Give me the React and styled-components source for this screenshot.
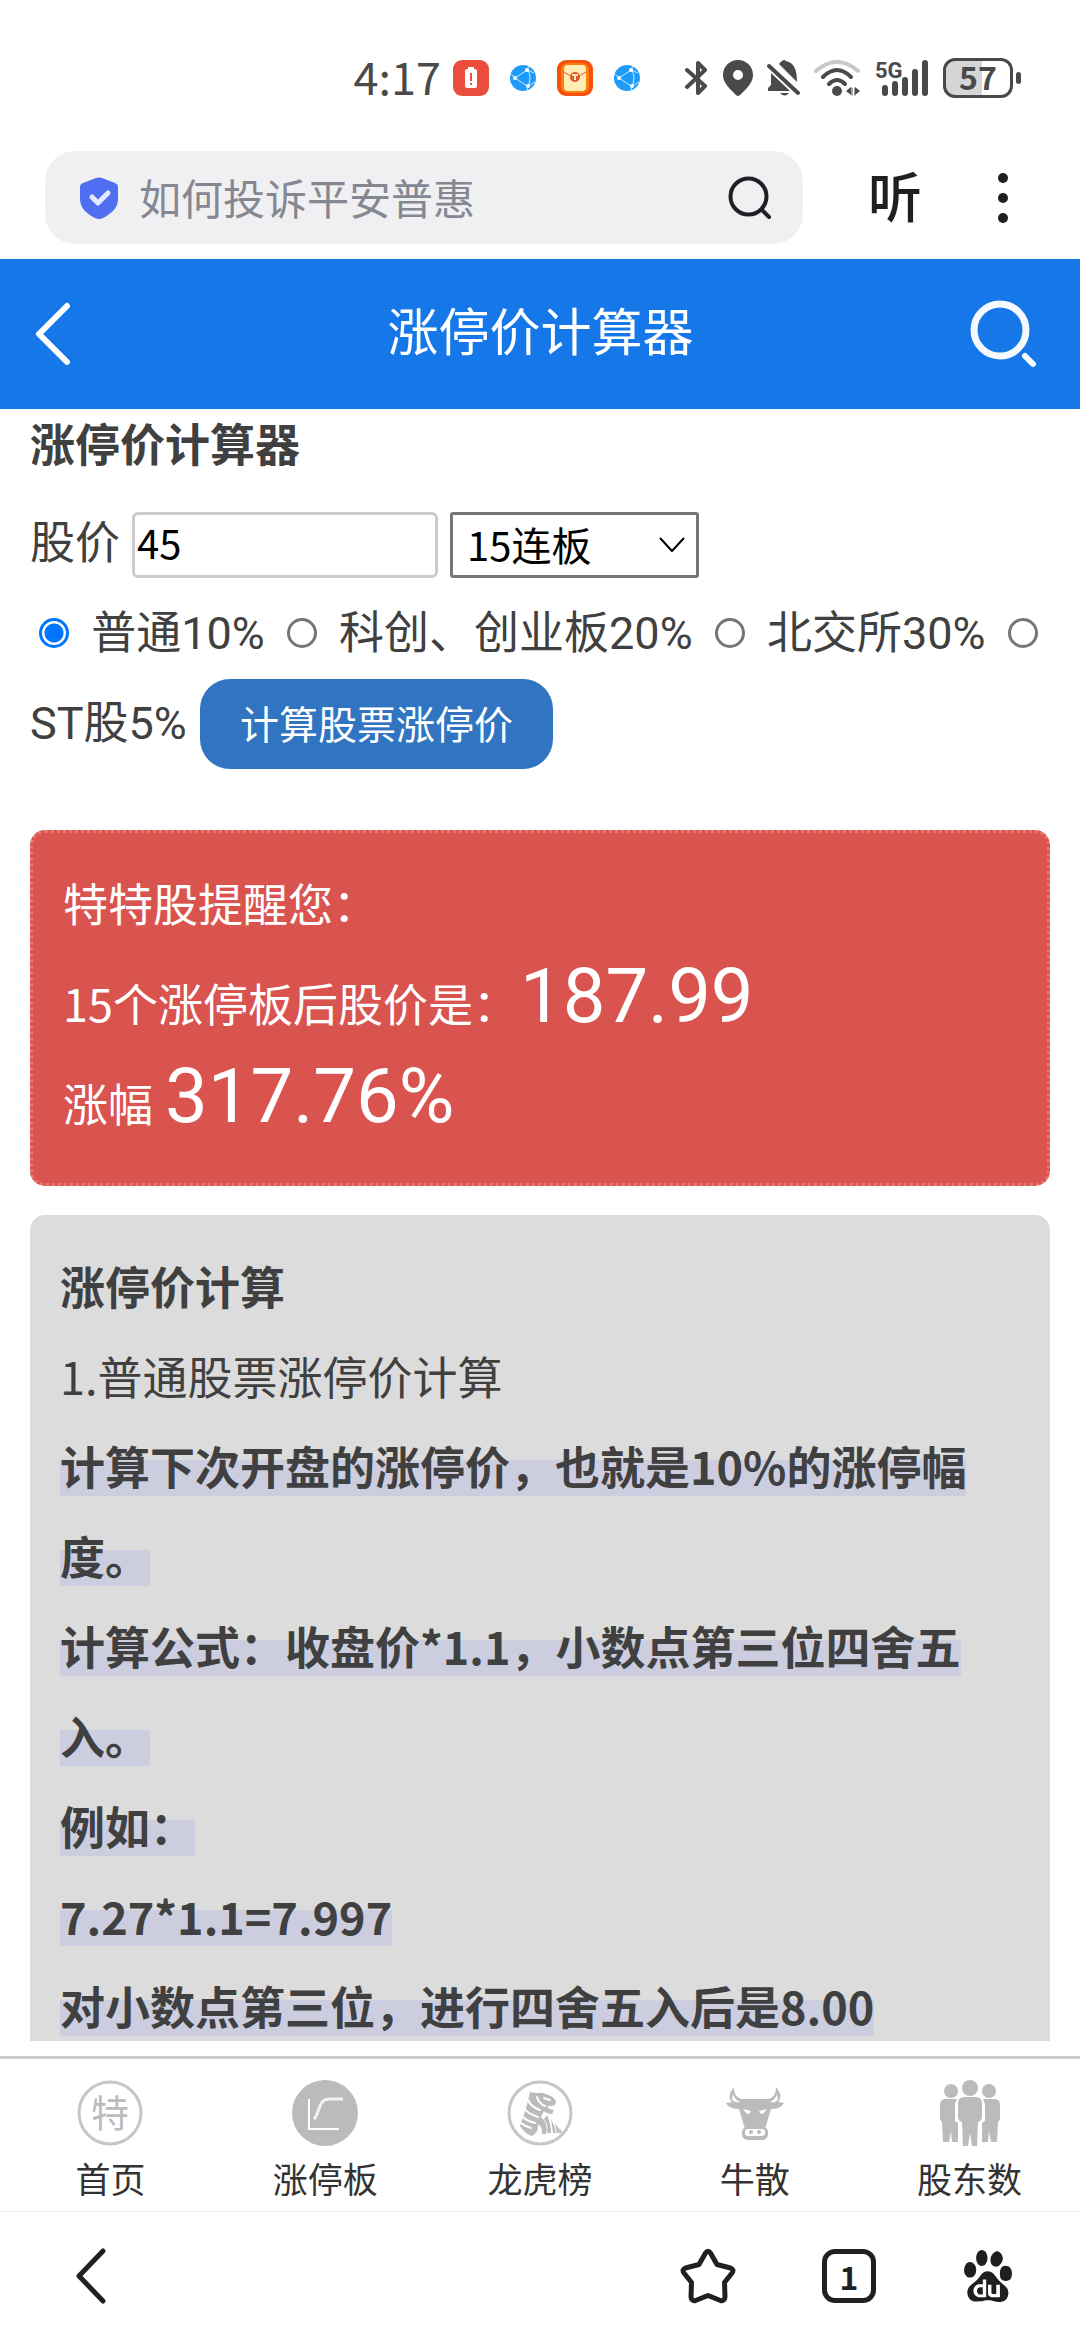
import React, { useState } from "react";
import styled, { createGlobalStyle } from "styled-components";
import { SiBaidu } from "react-icons/si";

const MARKETS = [
  { value: "10", label: "普通10%" },
  { value: "20", label: "科创、创业板20%" },
  { value: "30", label: "北交所30%" },
  { value: "5", label: "ST股5%" },
];

const TABS = [
  { name: "首页", icon: <HomeIcon /> },
  { name: "涨停板", icon: <LimitIcon /> },
  { name: "龙虎榜", icon: <TigerIcon /> },
  { name: "牛散", icon: <BullIcon /> },
  { name: "股东数", icon: <HoldersIcon /> },
];

export default function App() {
  return (
    <Screen>
      <GlobalStyle />
      <StatusBar />
      <AddressBar />
      <PageHeader>
        <IconButton aria-label="返回">
          <svg width="36" height="64" viewBox="0 0 36 64" fill="none" stroke="#fff" strokeWidth="6" strokeLinecap="round" strokeLinejoin="round">
            <path d="M32 4 4 32l28 28" />
          </svg>
        </IconButton>
        <PageTitle>涨停价计算器</PageTitle>
        <IconButton aria-label="搜索">
          <svg width="68" height="68" viewBox="0 0 68 68" fill="none" stroke="#f4faff" strokeLinecap="round">
            <circle cx="30" cy="30" r="26" strokeWidth="7" />
            <path d="m55 56 8 8" strokeWidth="6" />
          </svg>
        </IconButton>
      </PageHeader>
      <Main>
        <Calculator />
        <Guide />
      </Main>
      <TabBar>
        {TABS.map((tab) => (
          <Tab key={tab.name} href="#">
            {tab.icon}
            {tab.name}
          </Tab>
        ))}
      </TabBar>
      <BrowserBar>
        <IconButton aria-label="后退">
          <svg width="32" height="58" viewBox="0 0 32 58" fill="none" stroke="#1f2024" strokeWidth="5" strokeLinecap="round" strokeLinejoin="round">
            <path d="M28 4 4 29l24 25" />
          </svg>
        </IconButton>
        <BrowserActions>
          <IconButton aria-label="收藏">
            <svg width="56" height="56" viewBox="0 0 56 56" fill="none" stroke="#1f2024" strokeWidth="5" strokeLinejoin="round">
              <path d="M25.400 5.200Q28 1.500 30.600 5.200L37 16.500 50.500 20Q54.500 21.500 52 25L44.500 34.500 45 49Q44.500 53.500 40.500 52.500L28 47.500 15.500 52.500Q11.500 53.500 11 49L11.500 34.500 4 25Q1.500 21.500 5.500 20L19 16.500Z" />
            </svg>
          </IconButton>
          <TabCount aria-label="窗口">1</TabCount>
          <IconButton aria-label="百度">
            <SiBaidu size={52} color="#1f1f1f" />
          </IconButton>
        </BrowserActions>
      </BrowserBar>
    </Screen>
  );
}

function StatusBar() {
  return (
    <StatusRow>
      <Clock>4:17</Clock>
      <Notifications>
        <svg width="36" height="36" viewBox="0 0 36 36">
          <rect width="36" height="36" rx="9" fill="#ea4d3c" />
          <path d="M15 7h6v2h-6zM14 9h8q2 0 2 2v15q0 2-2 2h-8q-2 0-2-2V11q0-2 2-2z" fill="#fff" />
          <path d="M18 13v8M18 23v2" stroke="#ea4d3c" strokeWidth="2" />
        </svg>
        <GlobeIcon />
        <svg width="36" height="36" viewBox="0 0 36 36">
          <rect width="36" height="36" rx="9" fill="#f4520c" />
          <rect x="4" y="3" width="28" height="30" rx="7" fill="#ff7d0c" />
          <rect x="7" y="5" width="22" height="26" rx="4" fill="#ffedb5" />
          <path d="M7 12q11 9 22 0" fill="none" stroke="#e8552a" />
          <circle cx="18" cy="17" r="5" fill="#e8552a" />
          <path d="M15 15h6M18 15v5" stroke="#ffedb5" strokeWidth="2" />
        </svg>
        <GlobeIcon />
      </Notifications>
      <SystemIcons>
        <svg width="24" height="36" viewBox="0 0 24 36" fill="none" stroke="#4a4a4a" strokeWidth="4" strokeLinejoin="round" strokeLinecap="round">
          <path d="M2 10 20 26l-7 7V3l7 7L2 27" />
        </svg>
        <svg width="30" height="36" viewBox="0 0 30 36" fill="#4a4a4a" fillRule="evenodd">
          <path d="M15 0C6 0 0 7 0 15c0 8 7 14 13 20q2 2 4 0c6-6 13-12 13-20C30 7 24 0 15 0zm0 10a5 5 0 1 1 0 10 5 5 0 0 1 0-10z" />
        </svg>
        <svg width="33" height="36" viewBox="0 0 33 36" fill="#4a4a4a">
          <path d="M4 13 23 31H1v-3l3-3zM12 4q1-2 3-3 2-2 4 0c8 2 11 8 11 21zM13 33h9q-4 5-9 0z" />
          <path d="m2 6 29 27" stroke="#4a4a4a" strokeWidth="4" strokeLinecap="round" />
        </svg>
        <svg width="47" height="36" viewBox="0 0 47 36" fill="none" stroke="#4a4a4a" strokeWidth="4" strokeLinecap="round">
          <path d="M2 11q21-18 42 0" stroke="#c9c9c9" />
          <path d="M9 17q14-14 28 0M15 24q8-8 16 0" />
          <circle cx="23" cy="31" r="5" fill="#4a4a4a" stroke="none" />
          <path d="M37 27v8l-5-4zM41 27v8l5-4z" fill="#4a4a4a" stroke="none" />
          <path d="M38 28v7M41 28v7" strokeWidth="1" />
        </svg>
        <svg width="54" height="56" viewBox="0 -10 54 56">
          <text x="0" y="18" fontSize="22" fontWeight="700" fill="#4a4a4a" fontFamily="Roboto, sans-serif">
            5G
          </text>
          <path d="M10 28v5M20 24v9M30 20v13M40 12v21M50 3v30" stroke="#4a4a4a" strokeWidth="6" strokeLinecap="round" />
        </svg>
        <Battery>57</Battery>
      </SystemIcons>
    </StatusRow>
  );
}

function AddressBar() {
  return (
    <AddressRow>
      <SearchBox>
        <svg width="40" height="42" viewBox="0 0 40 42">
          <path d="M17 1q3-1 6 0l13 5q3 1 3 4v12c0 9-7 15-15 19q-4 2-8 0C8 37 1 31 1 22V10q0-3 3-4z" fill="#4f6ef2" />
          <path d="m13 20 6 6 10-10" fill="none" stroke="#e4e9ff" strokeWidth="5" strokeLinecap="round" strokeLinejoin="round" />
        </svg>
        <SearchInput aria-label="搜索" placeholder="如何投诉平安普惠" />
        <svg width="44" height="44" viewBox="0 0 44 44" fill="none" stroke="#1f2024" strokeWidth="4" strokeLinecap="round">
          <circle cx="20.500" cy="20.500" r="18" />
          <path d="m34 34 7 7" />
        </svg>
      </SearchBox>
      <ListenButton>听</ListenButton>
      <IconButton aria-label="更多">
        <svg width="12" height="52" viewBox="0 0 12 52" fill="#1f2024">
          <circle cx="6" cy="6" r="5" />
          <circle cx="6" cy="26" r="5" />
          <circle cx="6" cy="46" r="5" />
        </svg>
      </IconButton>
    </AddressRow>
  );
}

function Calculator() {
  const [price, setPrice] = useState("45");
  const [boards, setBoards] = useState(15);
  const [rate, setRate] = useState("10");
  const [result, setResult] = useState({ boards: 15, price: "187.99", gain: "317.76" });

  // 每个涨停价都四舍五入到分
  const calculate = (e) => {
    e.preventDefault();
    const start = Number(price);
    let current = start;
    for (let i = 0; i < boards; i++) {
      current = Math.round(current * (100 + Number(rate))) / 100;
    }
    setResult({
      boards,
      price: current.toFixed(2),
      gain: ((current / start - 1) * 100).toFixed(2),
    });
  };

  return (
    <>
      <SectionTitle>涨停价计算器</SectionTitle>
      <form onSubmit={calculate}>
        <PriceRow>
          <PriceLabel htmlFor="price">股价</PriceLabel>
          <PriceInput id="price" value={price} onChange={(e) => setPrice(e.target.value)} />
          <SelectWrap>
            <BoardSelect
              aria-label="连板数"
              value={boards}
              onChange={(e) => setBoards(Number(e.target.value))}
            >
              {Array.from({ length: 20 }, (_, i) => (
                <option key={i} value={i + 1}>
                  {i + 1}连板
                </option>
              ))}
            </BoardSelect>
            <svg width="26" height="16" viewBox="0 0 26 16" fill="none" stroke="#000" strokeWidth="2">
              <path d="m1 1 12 13L25 1" />
            </svg>
          </SelectWrap>
        </PriceRow>
        <MarketRow>
          {MARKETS.map((market) => (
            <React.Fragment key={market.value}>
              <MarketLabel>
                <Radio
                  type="radio"
                  name="market"
                  value={market.value}
                  checked={rate === market.value}
                  onChange={() => setRate(market.value)}
                />{" "}
                {market.label}
              </MarketLabel>{" "}
            </React.Fragment>
          ))}
          <SubmitButton type="submit">计算股票涨停价</SubmitButton>
        </MarketRow>
      </form>
      <ResultBox>
        <ResultLine>特特股提醒您：</ResultLine>
        <ResultLine>
          {result.boards}个涨停板后股价是：
          <Figure>{result.price}</Figure>
        </ResultLine>
        <ResultLine>
          涨幅
          <Figure $spaced>{result.gain}%</Figure>
        </ResultLine>
      </ResultBox>
    </>
  );
}

function Guide() {
  return (
    <GuideBox>
      <GuideTitle>涨停价计算</GuideTitle>
      <p>1.普通股票涨停价计算</p>
      <p>
        <Mark>计算下次开盘的涨停价，也就是10%的涨停幅度。</Mark>
      </p>
      <p>
        <Mark>计算公式：收盘价*1.1，小数点第三位四舍五入。</Mark>
      </p>
      <p>
        <Mark>例如：</Mark>
      </p>
      <p>
        <Mark>7.27*1.1=7.997</Mark>
      </p>
      <p>
        <Mark>对小数点第三位，进行四舍五入后是8.00</Mark>
      </p>
    </GuideBox>
  );
}

function GlobeIcon() {
  return (
    <svg width="26" height="26" viewBox="0 0 26 26">
      <circle cx="13" cy="13" r="13" fill="#1e9bfa" />
      <g fill="none" stroke="#c9ecff" strokeWidth="1">
        <path d="M5 13 17 5M5 13l12 8M18 5q4 8 0 16M5 13 1 9M17 5l2-4M18 21l-1 5M17 5l7 3M18 21l7-4" />
      </g>
      <circle cx="5" cy="13" r="2" fill="#fff" />
      <circle cx="17" cy="5" r="2" fill="#fff" />
      <circle cx="18" cy="21" r="2" fill="#fff" />
    </svg>
  );
}

function HomeIcon() {
  return (
    <svg width="66" height="66" viewBox="0 0 66 66">
      <circle cx="33" cy="33" r="31" fill="none" stroke="#c6c6c6" strokeWidth="3" />
      <text x="33" y="47" textAnchor="middle" fontSize="38" fill="#bcbcbc" fontFamily="Noto Sans CJK SC, sans-serif">
        特
      </text>
    </svg>
  );
}

function LimitIcon() {
  return (
    <svg width="66" height="66" viewBox="0 0 66 66" fill="none" stroke="#fff">
      <circle cx="33" cy="33" r="33" fill="#bbb" stroke="none" />
      <path d="M17 19v30h30" strokeWidth="2" />
      <path d="M22 39c6-6 4-20 15-20h14" stroke="#f2f2f2" strokeWidth="3" />
    </svg>
  );
}

function TigerIcon() {
  return (
    <svg width="66" height="66" viewBox="0 0 66 66">
      <circle cx="33" cy="33" r="31" fill="none" stroke="#c6c6c6" strokeWidth="3" />
      <g fill="#bbb">
        <path d="M23 12l6 1q7-1 12 2 5 1 8 6l-1 4-4 1-4 0 2 3 5 1-2 4q-5 0-8-3l-3 6q8 6 5 17l-4 0q1-6-4-10 1 8-6 12-7-2-12-10l2-6 3-9 3-10z" />
        <path d="M40 35q4 9 4 18h-4q2-8-3-14zM44 39q4 7 5 14h-3zM48 43q4 5 5 10h-3zM52 48q3 2 3 5h-2z" />
      </g>
      <g fill="none" stroke="#fff" strokeWidth="2" strokeLinecap="round">
        <path d="M21 20q3 7 12 10M17 28q4 6 14 9M14 35q5 6 14 8M14 43q5 4 10 5M30 17q2 7 8 9M37 18l6 2" />
      </g>
    </svg>
  );
}

function BullIcon() {
  return (
    <svg width="66" height="66" viewBox="0 0 66 66" fill="#bbb">
      <path d="M12 7C6 14 7 19 10 22L4 23Q7 29 17 29L22 46H44L49 29Q59 29 62 23L56 22C59 19 60 14 54 7 54 13 52 18 46 19H20C14 18 12 13 12 7Z" />
      <path d="M23 46h20l3 5q1 9-6 9H26q-7 0-6-9z" />
      <path d="M11 14q2 6 7 8-6 1-8-3zM55 14q-2 6-7 8 6 1 8-3z" fill="#fff" />
      <path d="m21 29 8 2q-1 3-4 3zM45 29l-8 2q1 3 4 3z" fill="#fff" />
      <rect x="23" y="49" width="20" height="7" rx="3" fill="#fff" />
      <circle cx="29" cy="52" r="2" />
      <circle cx="37" cy="52" r="2" />
    </svg>
  );
}

function HoldersIcon() {
  return (
    <svg width="66" height="66" viewBox="0 0 66 66" fill="#bbb">
      <circle cx="14" cy="11" r="7" />
      <circle cx="52" cy="11" r="7" />
      <circle cx="33" cy="8" r="8" />
      <path d="M8 19h12q-2 3-2 8v14l3 2v19h-6l-1-11-2 11H6l-1-20q-3-3-2-8v-9q0-6 5-6zM58 19H46q2 3 2 8v14l-3 2v19h6l1-11 2 11h6l1-20q3-3 2-8v-9q0-6-5-6z" />
      <path d="M27 17h12q6 0 6 7v12q0 5-4 6l-1 24h-5l-2-13-2 13h-5l-1-24q-4-1-4-6V24q0-7 6-7z" />
    </svg>
  );
}

const GlobalStyle = createGlobalStyle`
  * {
    box-sizing: border-box;
  }
  body {
    margin: 0;
    background-color: #fff;
    color: #404040;
    font-family: "Noto Sans CJK SC", sans-serif;
    font-size: 45px;
    line-height: 90px;
  }
  button, input, select {
    font-family: inherit;
  }
  h1, h2, p {
    margin: 0;
  }
  svg {
    display: block;
    flex-shrink: 0;
  }
`;

const Screen = styled.div`
  display: flex;
  flex-direction: column;
  height: 100vh;
`;

const StatusRow = styled.div`
  display: flex;
  align-items: center;
  justify-content: flex-end;
  padding: 50px 59px 0 0;
`;

const Clock = styled.span`
  margin-right: 12px;
  padding-bottom: 4px;
  color: #4a4a4a;
  font-size: 45px;
  font-weight: 400;
  line-height: 40px;
`;

const Notifications = styled.div`
  display: flex;
  align-items: center;
  gap: 21px;
  margin-right: 45px;
`;

const SystemIcons = styled.div`
  display: flex;
  align-items: center;
  gap: 14px;
`;

const Battery = styled.span`
  position: relative;
  width: 70px;
  height: 40px;
  margin-right: 8px;
  border: 3px solid #4a4a4a;
  border-radius: 12px;
  background: linear-gradient(to right, #d6d6d6 57%, #fff 57%);
  color: #4a4a4a;
  font-size: 32px;
  font-weight: 700;
  line-height: 31px;
  text-align: center;
  &::after {
    content: "";
    position: absolute;
    top: 11px;
    right: -11px;
    width: 5px;
    height: 12px;
    border-radius: 3px;
    background-color: #4a4a4a;
  }
`;

const AddressRow = styled.div`
  display: flex;
  align-items: center;
  padding: 45px 71px 15px 45px;
`;

const SearchBox = styled.div`
  display: flex;
  flex: 1;
  align-items: center;
  height: 93px;
  padding: 0 31px 0 34px;
  border-radius: 30px;
  background-color: #f0f0f3;
`;

const SearchInput = styled.input`
  flex: 1;
  min-width: 0;
  padding: 0 20px 2px;
  border: none;
  background: transparent;
  font-size: 42px;
  &::placeholder {
    color: #858891;
  }
`;

const IconButton = styled.button`
  padding: 0;
  border: none;
  background: transparent;
  cursor: pointer;
`;

const ListenButton = styled(IconButton)`
  margin: 0 75px 0 65px;
  padding-bottom: 6px;
  color: #1f2024;
  font-size: 54px;
  font-weight: 500;
  line-height: 60px;
`;

const PageHeader = styled.header`
  display: flex;
  flex-shrink: 0;
  align-items: center;
  justify-content: space-between;
  height: 150px;
  padding: 0 42px 0 35px;
  background-color: #1677e8;
`;

const PageTitle = styled.h1`
  flex: 1;
  padding: 0 0 10px 40px;
  color: #fff;
  font-size: 51px;
  font-weight: 400;
  text-align: center;
`;

const Main = styled.main`
  flex: 1;
  min-height: 0;
  padding: 0 30px;
  overflow-y: auto;
  scrollbar-width: none;
`;

const SectionTitle = styled.h2`
  margin-bottom: 24px;
  font-size: 45px;
  font-weight: 700;
  line-height: 68px;
`;

const PriceRow = styled.div`
  display: flex;
  align-items: center;
  gap: 12px;
  height: 88px;
`;

const PriceLabel = styled.label`
  padding-bottom: 10px;
`;

const PriceInput = styled.input`
  width: 306px;
  height: 66px;
  padding: 0 2px 6px;
  border: 3px solid #ccc;
  border-radius: 6px;
  color: #000;
  font-size: 40px;
`;

const SelectWrap = styled.div`
  position: relative;
  & svg {
    position: absolute;
    top: 50%;
    right: 14px;
    margin-top: -8px;
    pointer-events: none;
  }
`;

const BoardSelect = styled.select`
  display: block;
  width: 249px;
  height: 66px;
  padding: 0 14px 6px;
  border: 3px solid #767676;
  border-radius: 3px;
  appearance: none;
  background-color: #fff;
  color: #000;
  font-size: 40px;
`;

const MarketRow = styled.div`
  font-family: Roboto, "Noto Sans CJK SC", sans-serif;
`;

const MarketLabel = styled.label`
  margin-right: 2px;
`;

const Radio = styled.input`
  width: 30px;
  height: 30px;
  margin: 0 11px 0 9px;
  border: 3px solid #767676;
  border-radius: 50%;
  appearance: none;
  vertical-align: 1px;
  &:checked {
    border-color: #0075ff;
    background: radial-gradient(#0075ff 9px, #fff 10px);
  }
`;

const SubmitButton = styled.button`
  height: 90px;
  padding: 0 40px 4px;
  border: none;
  border-radius: 30px;
  background-color: #3074c2;
  color: #fff;
  font-family: "Noto Sans CJK SC", sans-serif;
  font-size: 39px;
  vertical-align: baseline;
  cursor: pointer;
`;

const ResultBox = styled.section`
  margin-top: 61px;
  padding: 20px 30px 30px;
  border: 3px dotted #e8786f;
  border-radius: 15px;
  background-color: #d9534f;
  color: #fff;
`;

const ResultLine = styled.div`
  display: flex;
  align-items: baseline;
  line-height: 100px;
`;

const Figure = styled.span`
  margin-left: ${(props) => (props.$spaced ? "12px" : "2px")};
  font-family: Roboto, "Noto Sans CJK SC", sans-serif;
  font-size: 76px;
  line-height: 74px;
`;

const GuideBox = styled.section`
  margin-top: 29px;
  padding: 26px 30px 30px;
  border-radius: 15px;
  background-color: #dcdcdc;
`;

const GuideTitle = styled.h2`
  font-size: 45px;
  font-weight: 700;
`;

const Mark = styled.strong`
  background: linear-gradient(transparent 27px, #cccee0 27px, #cccee0 63px, transparent 63px);
  -webkit-box-decoration-break: clone;
  box-decoration-break: clone;
`;

const TabBar = styled.nav`
  display: grid;
  grid-template-columns: repeat(5, 1fr);
  margin-top: 15px;
  padding: 21px 3px 9px;
  border-top: 3px solid #ccc;
`;

const Tab = styled.a`
  display: flex;
  flex-direction: column;
  align-items: center;
  gap: 7px;
  color: #333;
  font-size: 35px;
  line-height: 49px;
  text-decoration: none;
`;

const BrowserBar = styled.nav`
  display: flex;
  align-items: center;
  justify-content: space-between;
  height: 129px;
  padding: 0 66px 0 75px;
  border-top: 1px solid #ebebeb;
`;

const BrowserActions = styled.div`
  display: flex;
  align-items: center;
  gap: 86px;
`;

const TabCount = styled(IconButton)`
  width: 54px;
  height: 54px;
  border: 5px solid #1f2024;
  border-radius: 13px;
  color: #1f2024;
  font-size: 32px;
  font-weight: 700;
  line-height: 42px;
`;
